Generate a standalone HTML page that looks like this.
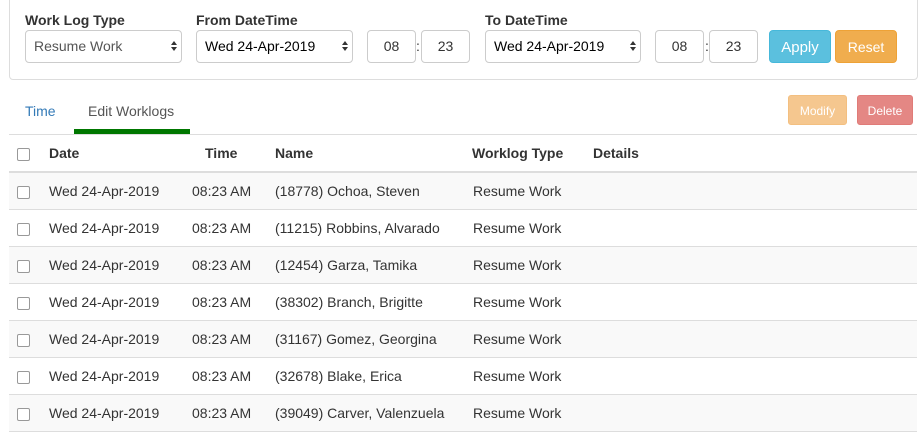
<!DOCTYPE html>
<html><head><style>
body{margin:0;width:920px;height:439px;overflow:hidden;background:#fff;font-family:"Liberation Sans",sans-serif;font-size:14px;color:#333;position:relative}
.a{position:absolute}
.panel{left:9px;top:-5px;width:907px;height:83px;border:1px solid #ddd;border-radius:4px}
.lbl{font-weight:bold;font-size:14px;top:12px}
.ctl{top:30px;height:31px;border:1px solid #ccc;border-radius:4px;background:#fff;box-sizing:content-box}
.sel{line-height:31px;padding-left:8px;box-sizing:border-box;height:33px}
.arr{position:absolute;right:7px;top:11px;width:0;height:0}
.arr:before{content:"";position:absolute;left:-3px;top:-1px;border:3.5px solid transparent;border-bottom:4px solid #333;border-top:0}
.arr:after{content:"";position:absolute;left:-3px;top:5px;border:3.5px solid transparent;border-top:4px solid #333;border-bottom:0}
.tm{line-height:31px;text-align:center;width:47px}
.btn{top:30px;height:33px;line-height:33px;color:#fff;border-radius:4px;text-align:center;box-sizing:border-box}
.sbtn{top:95px;height:30px;line-height:30px;font-size:12px;color:#fff;border-radius:3px;text-align:center;box-sizing:border-box}
.cb{width:11px;height:11px;border:1px solid #999;border-radius:2px;background:#fff;left:17px}
.row{left:9px;width:908px;height:37px;border-top:1px solid #ddd;box-sizing:border-box}
.row span{position:absolute;top:10px}
</style></head><body>
<div class="a panel"></div>
<div class="a lbl" style="left:25px">Work Log Type</div>
<div class="a lbl" style="left:196px">From DateTime</div>
<div class="a lbl" style="left:485px">To DateTime</div>
<div class="a ctl sel" style="left:25px;width:157px;color:#555">Resume Work<i class="arr"></i></div>
<div class="a ctl sel" style="left:196px;width:157px;color:#000">Wed 24-Apr-2019<i class="arr"></i></div>
<div class="a ctl tm" style="left:367px">08</div>
<div class="a" style="left:416px;top:38px">:</div>
<div class="a ctl tm" style="left:421px">23</div>
<div class="a ctl sel" style="left:485px;width:156px;color:#000">Wed 24-Apr-2019<i class="arr"></i></div>
<div class="a ctl tm" style="left:655px">08</div>
<div class="a" style="left:705px;top:38px">:</div>
<div class="a ctl tm" style="left:709px">23</div>
<div class="a btn" style="left:769px;width:62px;background:#5bc0de;border:1px solid #46b8da;font-size:15px">Apply</div>
<div class="a btn" style="left:835px;width:62px;background:#f0ad4e;border:1px solid #eea236">Reset</div>
<div class="a" style="left:25px;top:103px;color:#337ab7">Time</div>
<div class="a" style="left:88px;top:103px;color:#555">Edit Worklogs</div>
<div class="a" style="left:74px;top:129px;width:116px;height:5px;background:#007700"></div>
<div class="a" style="left:9px;top:134px;width:908px;height:1px;background:#ddd"></div>
<div class="a sbtn" style="left:788px;width:59px;background:#f5c78f;border:1px solid #f3bf80">Modify</div>
<div class="a sbtn" style="left:857px;width:56px;background:#e48784;border:1px solid #e07b78">Delete</div>
<div class="a cb" style="top:148px"></div>
<div class="a" style="top:145px;left:49px;font-weight:bold">Date</div>
<div class="a" style="top:145px;left:205px;font-weight:bold">Time</div>
<div class="a" style="top:145px;left:275px;font-weight:bold">Name</div>
<div class="a" style="top:145px;left:472px;font-weight:bold">Worklog Type</div>
<div class="a" style="top:145px;left:593px;font-weight:bold">Details</div>
<div class="a" style="left:9px;top:171px;width:908px;height:2px;background:#ddd"></div>
<div class="a" style="top:173px;left:0">
<div class="a row" style="top:0;background:#f9f9f9;border-top:0"><i class="a cb" style="left:8px;top:13px"></i><span style="left:40px">Wed 24-Apr-2019</span><span style="left:183px">08:23 AM</span><span style="left:266px">(18778) Ochoa, Steven</span><span style="left:464px">Resume Work</span></div>
<div class="a row" style="top:36px"><i class="a cb" style="left:8px;top:13px"></i><span style="left:40px">Wed 24-Apr-2019</span><span style="left:183px">08:23 AM</span><span style="left:266px">(11215) Robbins, Alvarado</span><span style="left:464px">Resume Work</span></div>
<div class="a row" style="top:73px;background:#f9f9f9"><i class="a cb" style="left:8px;top:13px"></i><span style="left:40px">Wed 24-Apr-2019</span><span style="left:183px">08:23 AM</span><span style="left:266px">(12454) Garza, Tamika</span><span style="left:464px">Resume Work</span></div>
<div class="a row" style="top:110px"><i class="a cb" style="left:8px;top:13px"></i><span style="left:40px">Wed 24-Apr-2019</span><span style="left:183px">08:23 AM</span><span style="left:266px">(38302) Branch, Brigitte</span><span style="left:464px">Resume Work</span></div>
<div class="a row" style="top:147px;background:#f9f9f9"><i class="a cb" style="left:8px;top:13px"></i><span style="left:40px">Wed 24-Apr-2019</span><span style="left:183px">08:23 AM</span><span style="left:266px">(31167) Gomez, Georgina</span><span style="left:464px">Resume Work</span></div>
<div class="a row" style="top:184px"><i class="a cb" style="left:8px;top:13px"></i><span style="left:40px">Wed 24-Apr-2019</span><span style="left:183px">08:23 AM</span><span style="left:266px">(32678) Blake, Erica</span><span style="left:464px">Resume Work</span></div>
<div class="a row" style="top:221px;background:#f9f9f9"><i class="a cb" style="left:8px;top:13px"></i><span style="left:40px">Wed 24-Apr-2019</span><span style="left:183px">08:23 AM</span><span style="left:266px">(39049) Carver, Valenzuela</span><span style="left:464px">Resume Work</span></div>
<div class="a row" style="top:258px;height:1px"></div>
</div>
</body></html>
